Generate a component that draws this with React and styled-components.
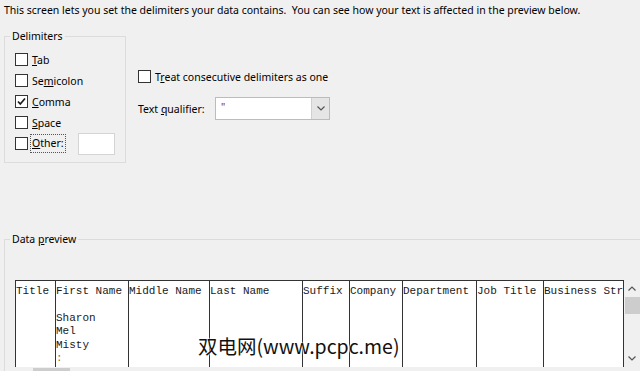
import React from "react";
import styled, { createGlobalStyle } from "styled-components";

const GlobalStyle = createGlobalStyle`
  html, body {
    margin: 0;
    background: #f0f0f0;
  }
  body {
    font-family: "Noto Sans", "Open Sans", sans-serif;
    font-size: 10.5px;
    color: #000;
  }
`;

const columns = [
  { title: "Title", width: 40, values: [] },
  { title: "First Name", width: 73, values: ["", "Sharon", "Mel", "Misty", ":"] },
  { title: "Middle Name", width: 81, values: [] },
  { title: "Last Name", width: 93, values: [] },
  { title: "Suffix", width: 47, values: [] },
  { title: "Company", width: 53, values: [] },
  { title: "Department", width: 74, values: [] },
  { title: "Job Title", width: 67, values: [] },
  { title: "Business Street", width: 120, values: [] },
];

const delimiters = [
  { pre: "", key: "T", post: "ab", checked: false },
  { pre: "Se", key: "m", post: "icolon", checked: false },
  { pre: "", key: "C", post: "omma", checked: true },
  { pre: "", key: "S", post: "pace", checked: false },
];

const Check = ({ checked }) => (
  <Box>
    {checked && (
      <svg width="11" height="11" viewBox="0 0 11 11">
        <polyline
          points="2,5.5 4.3,8 9,2.5"
          fill="none"
          stroke="#1a1a1a"
          strokeWidth="1.7"
        />
      </svg>
    )}
  </Box>
);

const Chevron = ({ up }) => (
  <svg width="8" height="5" viewBox="0 0 8 5">
    <polyline
      points={up ? "0.5,4.5 4,1 7.5,4.5" : "0.5,0.5 4,4 7.5,0.5"}
      fill="none"
      stroke="#555"
      strokeWidth="1.2"
    />
  </svg>
);

const App = () => {
  return (
    <>
      <GlobalStyle />
      <Page>
        <Intro>
          This screen lets you set the delimiters your data contains.&nbsp; You
          can see how your text is affected in the preview below.
        </Intro>

        <TopRow>
          <Group>
            <Legend>Delimiters</Legend>
            <OptionList>
              {delimiters.map((d, index) => (
                <Option key={index}>
                  <Check checked={d.checked} />
                  <span>
                    {d.pre}
                    <u>{d.key}</u>
                    {d.post}
                  </span>
                </Option>
              ))}
              <Option>
                <Check />
                <FocusLabel>
                  <u>O</u>ther:
                </FocusLabel>
                <OtherInput />
              </Option>
            </OptionList>
          </Group>

          <RightOptions>
            <Option>
              <Check />
              <span>
                T<u>r</u>eat consecutive delimiters as one
              </span>
            </Option>
            <QualifierRow>
              <QualifierLabel>
                Text <u>q</u>ualifier:
              </QualifierLabel>
              <Combo>
                <ComboValue>"</ComboValue>
                <ComboButton>
                  <Chevron />
                </ComboButton>
              </Combo>
            </QualifierRow>
          </RightOptions>
        </TopRow>

        <PreviewGroup>
          <Legend>
            Data <u>p</u>review
          </Legend>
          <PreviewArea>
            <Viewport>
              {columns.map((c, index) => (
                <Column key={index} $width={c.width}>
                  <Cell>{c.title}</Cell>
                  {c.values.map((v, i) => (
                    <Cell key={i} $faint={v === ":"}>
                      {v || "\u00a0"}
                    </Cell>
                  ))}
                </Column>
              ))}
            </Viewport>
            <VScroll>
              <ArrowButton>
                <Chevron up />
              </ArrowButton>
              <VThumb />
              <VTrack />
              <ArrowButton>
                <Chevron />
              </ArrowButton>
            </VScroll>
            <HScroll>
              <HThumb />
            </HScroll>
          </PreviewArea>
        </PreviewGroup>

        <Watermark>双电网(www.pcpc.me)</Watermark>
      </Page>
    </>
  );
};

const Page = styled.div`
  position: relative;
  width: 640px;
  height: 371px;
  overflow: hidden;
  padding-left: 4px;
  box-sizing: border-box;
`;

const Intro = styled.div`
  margin-top: 3px;
  line-height: 14px;
  white-space: nowrap;
`;

const TopRow = styled.div`
  display: flex;
  align-items: flex-start;
  margin-top: 12px;
`;

const Group = styled.fieldset`
  box-sizing: border-box;
  width: 122px;
  height: 134px;
  margin: 0;
  padding: 0 0 0 5px;
  border: 1px solid #dcdcdc;
`;

const Legend = styled.legend`
  padding: 0 2px;
  line-height: 15px;
`;

const OptionList = styled.div`
  display: flex;
  flex-direction: column;
  padding: 5px 0 0 5px;
`;

const Option = styled.div`
  display: flex;
  align-items: center;
  height: 21px;
  gap: 4px;
  white-space: nowrap;
`;

const Box = styled.span`
  box-sizing: border-box;
  width: 13px;
  height: 13px;
  flex: none;
  display: flex;
  align-items: center;
  justify-content: center;
  background: #fff;
  border: 1px solid #333;
`;

const FocusLabel = styled.span`
  outline: 1px dotted #555;
  outline-offset: 0;
  padding: 1px 1px 2px;
  margin-left: -1px;
`;

const OtherInput = styled.span`
  box-sizing: border-box;
  width: 37px;
  height: 22px;
  margin-left: 9px;
  background: #fff;
  border: 1px solid #d4d4d4;
`;

const RightOptions = styled.div`
  display: flex;
  flex-direction: column;
  margin-left: 12px;
  padding-top: 37px;
`;

const QualifierRow = styled.div`
  display: flex;
  align-items: center;
  margin-top: 10px;
`;

const QualifierLabel = styled.span`
  width: 77px;
  white-space: nowrap;
`;

const Combo = styled.div`
  box-sizing: border-box;
  display: flex;
  width: 115px;
  height: 23px;
  background: #fff;
  border: 1px solid #bcbcbc;
`;

const ComboValue = styled.span`
  flex: 1;
  padding: 1px 0 0 5px;
  line-height: 16px;
  color: #7a2a3a;
`;

const ComboButton = styled.span`
  width: 17px;
  display: flex;
  align-items: center;
  justify-content: center;
  background: #e5e5e5;
  border-left: 1px solid #d0d0d0;
`;

const PreviewGroup = styled.fieldset`
  box-sizing: border-box;
  width: 680px;
  height: 200px;
  margin: 69px 0 0;
  padding: 0 0 0 5px;
  border: 1px solid #dcdcdc;
`;

const PreviewArea = styled.div`
  display: grid;
  grid-template-columns: 609px 16px;
  grid-template-rows: 87px 17px;
  margin: 33px 0 0 5px;
`;

const Viewport = styled.div`
  display: flex;
  overflow: hidden;
  background: #fff;
  border-top: 1px solid #333;
  border-right: 1px solid #333;
`;

const Column = styled.div`
  box-sizing: border-box;
  flex: none;
  width: ${(p) => p.$width}px;
  border-left: 1px solid #333;
  padding-top: 4px;
  font-family: "Liberation Mono", "Courier New", monospace;
  font-size: 11px;
  color: #1a1a1a;
`;

const Cell = styled.div`
  line-height: 13.4px;
  white-space: pre;
  color: ${(p) => (p.$faint ? "#b06a1a" : "inherit")};
`;

const VScroll = styled.div`
  display: flex;
  flex-direction: column;
  background: #f0f0f0;
`;

const ArrowButton = styled.div`
  height: 17px;
  flex: none;
  display: flex;
  align-items: center;
  justify-content: center;
`;

const VThumb = styled.div`
  height: 17px;
  margin-left: 1px;
  background: #cdcdcd;
`;

const VTrack = styled.div`
  flex: 1;
`;

const HScroll = styled.div`
  display: flex;
  padding-left: 18px;
  background: #f0f0f0;
`;

const HThumb = styled.div`
  width: 37px;
  height: 15px;
  margin-top: 1px;
  background: #cdcdcd;
`;

const Watermark = styled.div`
  position: absolute;
  left: 198px;
  top: 334px;
  font-family: "Noto Sans CJK SC", sans-serif;
  font-size: 19.5px;
  line-height: 24px;
  color: #111;
  white-space: nowrap;
  text-shadow: 0 0 2px #fff, 0 0 2px #fff, 0 0 1px #fff;
`;

export default App;
